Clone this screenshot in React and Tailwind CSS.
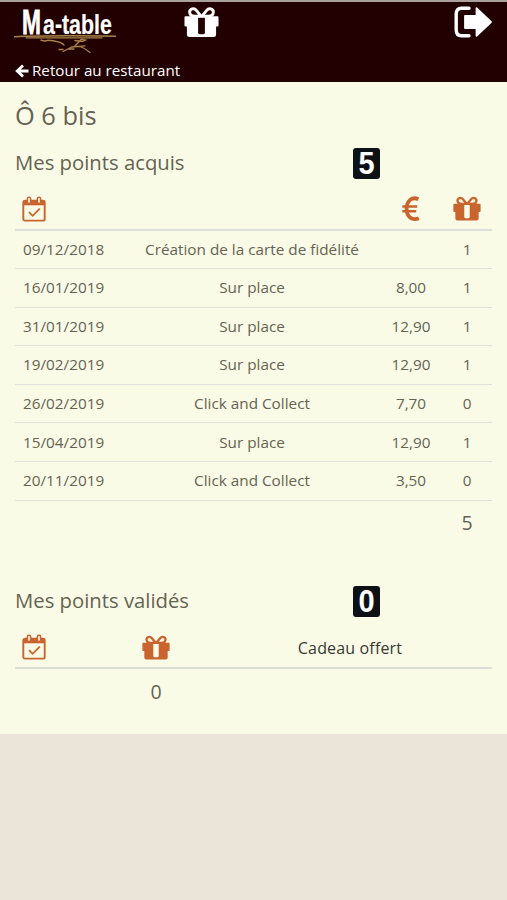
import React from 'react';

const points = [
  { date: '09/12/2018', label: 'Création de la carte de fidélité', amount: '', points: 1 },
  { date: '16/01/2019', label: 'Sur place', amount: '8,00', points: 1 },
  { date: '31/01/2019', label: 'Sur place', amount: '12,90', points: 1 },
  { date: '19/02/2019', label: 'Sur place', amount: '12,90', points: 1 },
  { date: '26/02/2019', label: 'Click and Collect', amount: '7,70', points: 0 },
  { date: '15/04/2019', label: 'Sur place', amount: '12,90', points: 1 },
  { date: '20/11/2019', label: 'Click and Collect', amount: '3,50', points: 0 },
];

function GiftIcon({ className }) {
  return (
    <svg viewBox="0 0 36 32" className={className}>
      <path
        d="M17.5 10 L12.5 3.8 C10.5 1.2 5.6 2.4 5.8 6 C6 8.8 8.4 10 11 10 Z M18.5 10 L23.5 3.8 C25.5 1.2 30.4 2.4 30.2 6 C30 8.8 27.6 10 25 10 Z"
        fill="none"
        stroke="currentColor"
        strokeWidth="3"
        strokeLinejoin="round"
      />
      <path
        fill="currentColor"
        fillRule="evenodd"
        d="M1.5 10 H34.5 Q35.5 10 35.5 11 V19.5 Q35.5 20.5 34.5 20.5 H33 V29 Q33 31.5 30.5 31.5 H5.5 Q3 31.5 3 29 V20.5 H1.5 Q.5 20.5 .5 19.5 V11 Q.5 10 1.5 10 Z M14.5 11 V27 Q14.5 28.5 16 28.5 H20 Q21.5 28.5 21.5 27 V11 Z"
      />
    </svg>
  );
}

function CalendarIcon() {
  return (
    <svg viewBox="0 0 24 26" className="h-[26px] w-6 text-[#c9642f]">
      <rect x="1.3" y="4.8" width="21.4" height="19.8" rx="1.7" fill="none" stroke="currentColor" strokeWidth="1.9" />
      <path d="M1.3 4.5 H22.7 V9.3 H1.3 Z" fill="currentColor" />
      <rect x="5.4" y="1.2" width="3.2" height="6.4" rx="1.5" fill="#fafbe7" stroke="currentColor" strokeWidth="1.5" />
      <rect x="15.4" y="1.2" width="3.2" height="6.4" rx="1.5" fill="#fafbe7" stroke="currentColor" strokeWidth="1.5" />
      <path d="M7 16.2 L10.6 19.8 L17.8 12.7" fill="none" stroke="currentColor" strokeWidth="1.8" />
    </svg>
  );
}

function EuroIcon() {
  return (
    <svg viewBox="0 0 18 26" className="h-[26px] w-[18px] text-[#c9642f]">
      <path
        d="M16.4 3.2 C9.5 .2 4.6 5.4 4.6 12.8 C4.6 20.4 9.8 25.2 16.8 22.2"
        fill="none"
        stroke="currentColor"
        strokeWidth="3.8"
      />
      <path d="M.3 10.4 H15.2 M.3 15.2 H14.2" stroke="currentColor" strokeWidth="2.5" />
    </svg>
  );
}

function SignOutIcon() {
  return (
    <svg viewBox="0 0 40 32" className="h-8 w-10">
      <path
        d="M16 2.2 H8.5 Q3.2 2.2 3.2 8 V24 Q3.2 29.8 8.5 29.8 H16"
        fill="none"
        stroke="white"
        strokeWidth="3.4"
        strokeLinecap="round"
      />
      <path
        d="M12 10 H23.5 V2.2 L38 16 L23.5 29.8 V22 H12 Z"
        fill="white"
        stroke="white"
        strokeWidth="1.8"
        strokeLinejoin="round"
      />
    </svg>
  );
}

function Logo() {
  return (
    <svg viewBox="0 0 104 50" className="h-[50px] w-[104px]">
      <g fill="white" stroke="white" fontFamily="'Liberation Sans', sans-serif" fontWeight="bold">
        <text transform="translate(8 31) scale(.65 1)" fontSize="35" strokeWidth=".8">M</text>
        <text transform="translate(29 30.5) scale(.75 1)" fontSize="28.5" strokeWidth=".2">a-table</text>
      </g>
      <g fill="none" stroke="#a8824a" strokeLinecap="round">
        <path d="M.5 33.8 C25 32.6 70 32.8 101.5 33.2" strokeWidth="1.5" />
        <path d="M12 34.8 H88" strokeWidth="1.2" />
        <path d="M27 37 Q31 39 34 37.2 Q45 38 49 41 M61 37.5 L68 38.5 L72 36.8" strokeWidth="1.4" />
        <path d="M61 43 L67 36.5 L70 36.5" strokeWidth="1.4" />
        <path d="M48 40.5 L50 42 M45 46.5 L49 46.5 M49 48.5 L58 44 L71 42.8 M66 43.5 Q71 45 76 49.5 M55 46 L60 46" strokeWidth="1.3" />
      </g>
    </svg>
  );
}

function Counter({ value }) {
  return (
    <div className="flex h-[31px] w-[27px] items-center justify-center rounded-[3px] bg-[#0d1014] font-['Liberation_Sans',sans-serif] text-[29px] font-bold leading-none text-white">
      <span className="scale-y-110">{value}</span>
    </div>
  );
}

function SectionTitle({ title, count }) {
  return (
    <div className="flex h-[32px] items-center">
      <h2 className="w-[338px] pb-[2px] text-[20.3px] leading-none">{title}</h2>
      <Counter value={count} />
    </div>
  );
}

export default function App() {
  return (
    <div className="min-h-[900px] bg-[#ebe4d8] font-['Open_Sans','Noto_Sans',sans-serif] text-[#646353]">
      {/* HEADER */}
      <header className="h-[82px] border-t-2 border-[#aaa09c] bg-[#220001] text-white">
        <div className="flex h-[56px] items-start pl-[14px]">
          <div className="pt-[1px]">
            <Logo />
          </div>
          <GiftIcon className="ml-[66px] mt-[4px] h-[32px] w-[35px]" />
          <div className="ml-auto mr-[14px] mt-[4px]">
            <SignOutIcon />
          </div>
        </div>
        <a className="flex h-[26px] items-center pl-[15px] text-[15.2px] leading-none">
          <svg viewBox="0 0 14 14" className="mr-[3px] h-[14px] w-[14px]">
            <path d="M8 1.5 L2.2 7 L8 12.5 M2.5 7 H13.5" fill="none" stroke="white" strokeWidth="2.8" />
          </svg>
          Retour au restaurant
        </a>
      </header>

      <main className="h-[652px] bg-[#fafbe7] px-[15px]">
        <h1 className="flex h-[65px] items-center pt-[2px] text-[25.4px] leading-none">Ô 6 bis</h1>

        {/* POINTS ACQUIS */}
        <SectionTitle title="Mes points acquis" count={5} />
        <div className="text-[15.3px]">
          <div className="grid h-[51.5px] grid-cols-[109px_256px_62px_50px] items-center border-b-2 border-[#dcded8] pt-[10px]">
            <div className="pl-[7px]"><CalendarIcon /></div>
            <div />
            <div className="flex justify-center"><EuroIcon /></div>
            <div className="flex justify-center"><GiftIcon className="h-[25px] w-[28px] text-[#c9642f]" /></div>
          </div>
          {points.map((p) => (
            <div
              key={p.date}
              className="grid h-[38.6px] grid-cols-[109px_256px_62px_50px] items-center border-b border-[#dfe1da] text-center leading-none"
            >
              <div className="pl-2 text-left">{p.date}</div>
              <div>{p.label}</div>
              <div>{p.amount}</div>
              <div>{p.points}</div>
            </div>
          ))}
          <div className="flex h-[45px] items-center justify-end">
            <span className="w-[50px] text-center text-[19.5px] leading-none">5</span>
          </div>
        </div>

        {/* POINTS VALIDES */}
        <div className="mt-[39.5px]">
          <SectionTitle title="Mes points validés" count={0} />
          <div className="grid h-[52px] grid-cols-[89px_104px_284px] items-center border-b-2 border-[#dcded8] pt-[10px]">
            <div className="pl-[7px]"><CalendarIcon /></div>
            <div className="flex justify-center"><GiftIcon className="h-[25px] w-[28px] text-[#c9642f]" /></div>
            <div className="pt-[2px] text-center text-[16px] font-medium tracking-[0.01em] text-[#373933]">Cadeau offert</div>
          </div>
          <div className="grid h-[44px] grid-cols-[89px_104px_284px] items-center text-center text-[19.5px]">
            <div />
            <div>0</div>
            <div />
          </div>
        </div>
      </main>
    </div>
  );
}
